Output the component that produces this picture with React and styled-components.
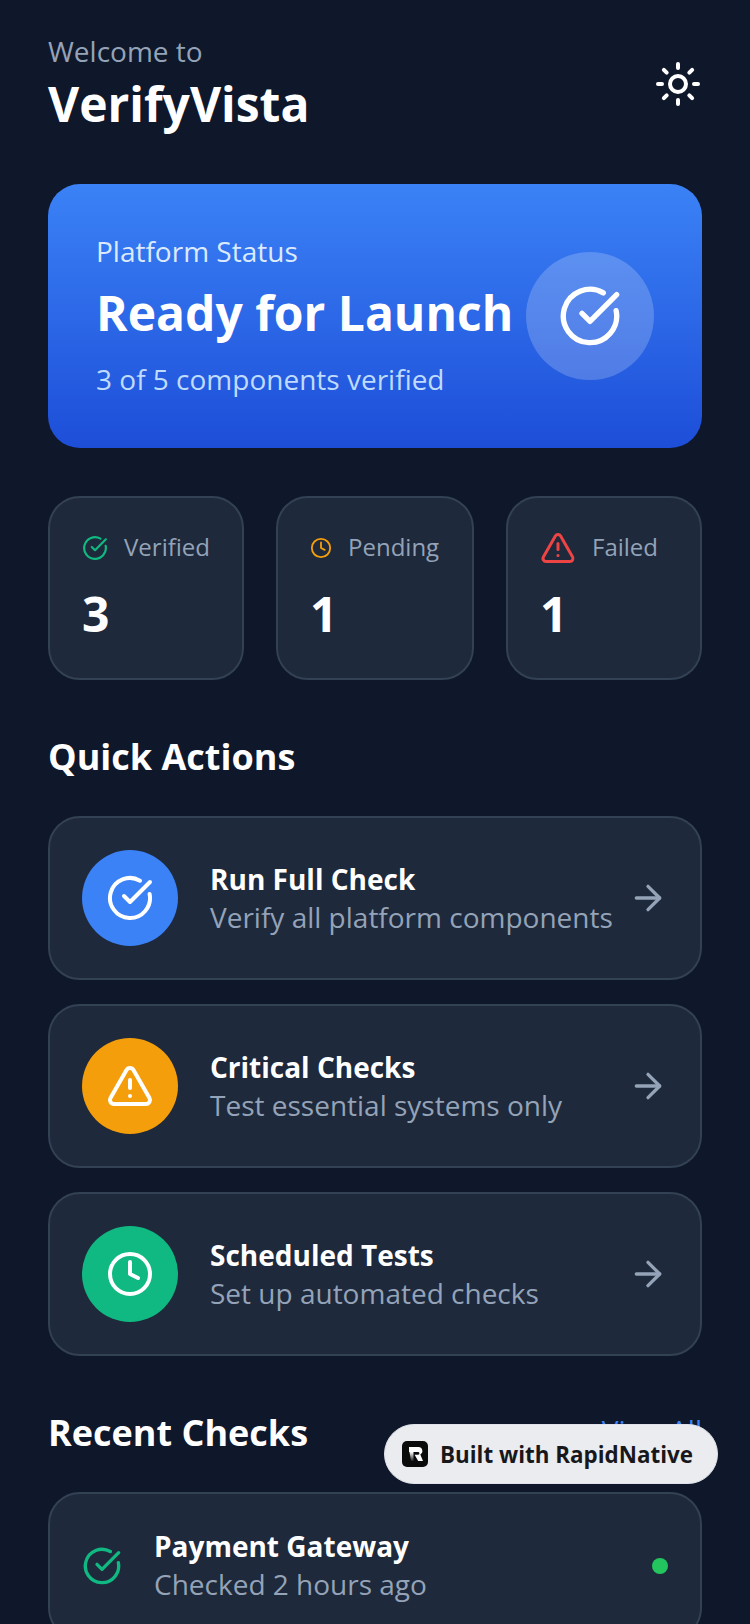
import React from 'react';
import styled, { createGlobalStyle } from 'styled-components';
import { ArrowRight, CircleCheckBig, Clock, Sun, TriangleAlert } from 'lucide-react';

const GlobalStyle = createGlobalStyle`
  html, body {
    margin: 0;
    padding: 0;
    background: #0f172a;
  }
  * {
    box-sizing: border-box;
  }
`;

const Page = styled.div`
  position: relative;
  width: 750px;
  height: 1624px;
  overflow: hidden;
  padding: 32px 48px 0;
  background: #0f172a;
  font-family: 'Open Sans', 'Noto Sans', sans-serif;
  color: #fff;
`;

const Header = styled.header`
  display: flex;
  justify-content: space-between;
  align-items: center;
  margin-bottom: 48px;
`;

const Welcome = styled.div`
  margin-bottom: 2px;
  font-size: 28px;
  line-height: 38px;
  color: #94a3b8;
`;

const Title = styled.h1`
  margin: 0;
  font-size: 48px;
  line-height: 64px;
  font-weight: 700;
`;

const Hero = styled.section`
  display: flex;
  justify-content: space-between;
  align-items: center;
  height: 264px;
  padding: 48px;
  border-radius: 32px;
  background: linear-gradient(180deg, #3b82f6, #1d4ed8);
  margin-bottom: 48px;
`;

const HeroLabel = styled.div`
  font-size: 28px;
  line-height: 38px;
  color: #dbeafe;
`;

const HeroTitle = styled.div`
  margin: 11px 0 13px;
  font-size: 48px;
  line-height: 64px;
  font-weight: 700;
  white-space: nowrap;
`;

const HeroNote = styled.div`
  font-size: 28px;
  line-height: 42px;
  color: #bfdbfe;
`;

const HeroBadge = styled.div`
  display: flex;
  flex: none;
  align-items: center;
  justify-content: center;
  width: 128px;
  height: 128px;
  border-radius: 50%;
  background: rgba(255, 255, 255, 0.2);
`;

const Stats = styled.div`
  display: grid;
  grid-template-columns: 196px 198px 196px;
  gap: 32px;
`;

const StatCard = styled.div`
  height: 184px;
  padding: 32px;
  border: 2px solid #334155;
  border-radius: 32px;
  background: #1e293b;
`;

const StatHead = styled.div`
  display: flex;
  align-items: center;
  gap: 16px;
  height: 36px;
`;

const StatLabel = styled.span`
  padding-bottom: 4px;
  font-size: 24px;
  color: #94a3b8;
`;

const StatValue = styled.div`
  margin-top: 16px;
  font-size: 48px;
  line-height: 64px;
  font-weight: 700;
`;

const SectionHead = styled.div`
  display: flex;
  justify-content: space-between;
  align-items: center;
  margin: 48px 0 30px;
`;

const SectionTitle = styled.h2`
  margin: 0;
  font-size: 36px;
  line-height: 58px;
  font-weight: 700;
`;

const ViewAll = styled.span`
  padding-bottom: 6px;
  font-size: 28px;
  color: #3b82f6;
`;

const ActionList = styled.div`
  display: flex;
  flex-direction: column;
  gap: 24px;
`;

const RowCard = styled.div`
  display: flex;
  align-items: center;
  gap: 32px;
  height: ${(p) => p.$height}px;
  padding: 32px;
  border: 2px solid #334155;
  border-radius: 32px;
  background: #1e293b;
`;

const ActionIcon = styled.div`
  display: flex;
  flex: none;
  align-items: center;
  justify-content: center;
  width: 96px;
  height: 96px;
  border-radius: 50%;
  background: ${(p) => p.$color};
`;

const RowText = styled.div`
  flex: 1;
  min-width: 0;
  padding-bottom: ${(p) => p.$lift}px;
`;

const RowTitle = styled.div`
  font-size: 28px;
  line-height: 40px;
  font-weight: 700;
`;

const RowNote = styled.div`
  font-size: 28px;
  line-height: 36px;
  color: #94a3b8;
  white-space: nowrap;
`;

const StatusDot = styled.span`
  flex: none;
  width: 16px;
  height: 16px;
  border-radius: 50%;
  background: #22c55e;
`;

const BuiltWith = styled.div`
  position: absolute;
  top: 1424px;
  left: 384px;
  display: flex;
  align-items: center;
  gap: 12px;
  width: 334px;
  height: 60px;
  padding-left: 17px;
  border: 1px solid #dfe2e8;
  border-radius: 30px;
  background: #ebecf0;
  color: #18181b;
  font-size: 22.4px;
  font-weight: 700;
  white-space: nowrap;
`;

function RapidLogo() {
  return (
    <svg width="26" height="26" viewBox="0 0 26 26">
      <defs>
        <linearGradient id="rapidStem" x1="0" y1="0" x2="0" y2="1">
          <stop offset="0" stopColor="#fff" />
          <stop offset="1" stopColor="#222" />
        </linearGradient>
      </defs>
      <rect width="26" height="26" rx="5" fill="#0b0b0c" />
      <path d="M7 6h9.5a4 4 0 0 1 1.8 7.5L21 20h-4.8l-3.6-6.2H16a1.3 1.3 0 0 0 0-2.8H7z" fill="#fff" />
      <path d="M7.5 11h4v9h-2.5z" fill="url(#rapidStem)" />
    </svg>
  );
}

const actions = [
  { title: 'Run Full Check', note: 'Verify all platform components', color: '#3b82f6', Icon: CircleCheckBig },
  { title: 'Critical Checks', note: 'Test essential systems only', color: '#f59e0b', Icon: TriangleAlert },
  { title: 'Scheduled Tests', note: 'Set up automated checks', color: '#10b981', Icon: Clock },
];

export default function App() {
  return (
    <Page>
      <GlobalStyle />
      <Header>
        <div>
          <Welcome>Welcome to</Welcome>
          <Title>VerifyVista</Title>
        </div>
        <Sun size={48} color="#fff" />
      </Header>

      <Hero>
        <div>
          <HeroLabel>Platform Status</HeroLabel>
          <HeroTitle>Ready for Launch</HeroTitle>
          <HeroNote>3 of 5 components verified</HeroNote>
        </div>
        <HeroBadge>
          <CircleCheckBig size={64} color="#fff" />
        </HeroBadge>
      </Hero>

      <Stats>
        <StatCard>
          <StatHead>
            <CircleCheckBig size={28} color="#10b981" />
            <StatLabel>Verified</StatLabel>
          </StatHead>
          <StatValue>3</StatValue>
        </StatCard>
        <StatCard>
          <StatHead>
            <Clock size={22} color="#f59e0b" />
            <StatLabel>Pending</StatLabel>
          </StatHead>
          <StatValue>1</StatValue>
        </StatCard>
        <StatCard>
          <StatHead>
            <TriangleAlert size={36} color="#ef4444" />
            <StatLabel>Failed</StatLabel>
          </StatHead>
          <StatValue>1</StatValue>
        </StatCard>
      </Stats>

      <SectionHead>
        <SectionTitle>Quick Actions</SectionTitle>
      </SectionHead>
      <ActionList>
        {actions.map(({ title, note, color, Icon }) => (
          <RowCard key={title} $height={164}>
            <ActionIcon $color={color}>
              <Icon size={48} color="#fff" />
            </ActionIcon>
            <RowText $lift={2}>
              <RowTitle>{title}</RowTitle>
              <RowNote>{note}</RowNote>
            </RowText>
            <ArrowRight size={40} color="#94a3b8" />
          </RowCard>
        ))}
      </ActionList>

      <SectionHead>
        <SectionTitle>Recent Checks</SectionTitle>
        <ViewAll>View All</ViewAll>
      </SectionHead>
      <RowCard $height={148}>
        <CircleCheckBig size={40} color="#10b981" />
        <RowText $lift={4}>
          <RowTitle>Payment Gateway</RowTitle>
          <RowNote>Checked 2 hours ago</RowNote>
        </RowText>
        <StatusDot />
      </RowCard>

      <BuiltWith>
        <RapidLogo />
        Built with RapidNative
      </BuiltWith>
    </Page>
  );
}
